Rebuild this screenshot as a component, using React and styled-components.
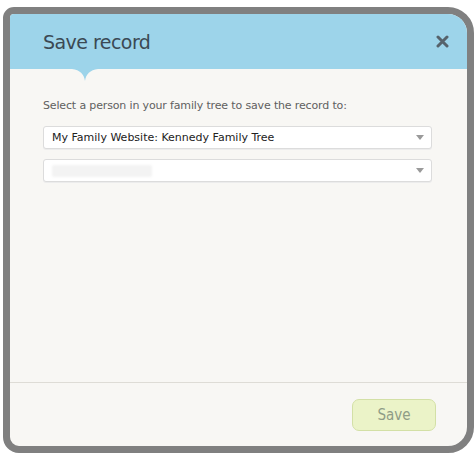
import React from 'react';
import styled, { createGlobalStyle } from 'styled-components';

const GlobalStyle = createGlobalStyle`
  *, *::before, *::after {
    box-sizing: border-box;
  }
  body {
    margin: 0;
    background: #ffffff;
    font-family: "DejaVu Sans", Verdana, sans-serif;
  }
`;

const Frame = styled.div`
  margin: 7px 0 0 3px;
  width: 471px;
  height: 446px;
  border: 7px solid #808080;
  border-radius: 11px 26px 26px 16px;
  background: #f8f7f4;
  display: flex;
  flex-direction: column;
  overflow: hidden;
`;

const Header = styled.div`
  position: relative;
  height: 55px;
  background: #9dd4ea;
  display: flex;
  align-items: center;
  justify-content: space-between;
  padding: 0 18px 0 33px;
  flex-shrink: 0;
`;

const Title = styled.h1`
  margin: 0;
  font-family: "DejaVu Sans", Verdana, sans-serif;
  font-weight: normal;
  font-size: 19px;
  color: #3b4954;
  letter-spacing: -0.55px;
`;

const Notch = styled.svg`
  position: absolute;
  left: 62px;
  top: 55px;
`;

const CloseButton = styled.button`
  border: 0;
  background: none;
  padding: 0;
  width: 13px;
  height: 13px;
  cursor: pointer;
  display: flex;
`;

const Body = styled.div`
  flex: 1;
  padding: 30px 35px 0 33px;
  display: flex;
  flex-direction: column;
  gap: 10px;
`;

const Prompt = styled.p`
  margin: 0 0 4px;
  font-size: 11px;
  letter-spacing: -0.15px;
  color: #606060;
`;

const SelectBox = styled.div`
  height: 23px;
  border: 1px solid #dcdcdc;
  border-radius: 3px;
  background: #ffffff;
  display: flex;
  align-items: center;
  justify-content: space-between;
  padding: 0 7px 0 8px;
  box-shadow: 0 1px 0 #ececec;
`;

const SelectText = styled.span`
  font-size: 11px;
  color: #222;
`;

const Blurred = styled.span`
  width: 100px;
  height: 12px;
  background: #f3f3f3;
  border-radius: 2px;
  filter: blur(1px);
`;

const Arrow = styled.span`
  width: 0;
  height: 0;
  border-left: 4px solid transparent;
  border-right: 4px solid transparent;
  border-top: 5px solid #9a9a9a;
`;

const Footer = styled.div`
  height: 64px;
  border-top: 1px solid #dedcd6;
  display: flex;
  align-items: center;
  justify-content: flex-end;
  padding: 0 31px 0 0;
  flex-shrink: 0;
`;

const SaveButton = styled.button`
  width: 84px;
  height: 32px;
  border: 1px solid #d3e0a6;
  border-radius: 7px;
  background: #ebf3c8;
  color: #8f9c86;
  font-size: 15px;
  font-family: "DejaVu Sans Condensed", "DejaVu Sans", sans-serif;
  cursor: default;
`;

export default function App() {
  return (
    <>
      <GlobalStyle />
      <Frame>
        <Header>
          <Title>Save record</Title>
          <CloseButton aria-label="Close">
            <svg width="13" height="13" viewBox="0 0 13 13">
              <path d="M2 2 L11 11 M11 2 L2 11" stroke="#56626b" strokeWidth="3" strokeLinecap="round" />
            </svg>
          </CloseButton>
          <Notch width="26" height="12" viewBox="0 0 26 12">
            <path d="M0 0 H26 C18 1 14 5 13 12 C12 5 8 1 0 0 Z" fill="#9dd4ea" />
          </Notch>
        </Header>
        <Body>
          <Prompt>Select a person in your family tree to save the record to:</Prompt>
          <SelectBox>
            <SelectText>My Family Website: Kennedy Family Tree</SelectText>
            <Arrow />
          </SelectBox>
          <SelectBox>
            <Blurred />
            <Arrow />
          </SelectBox>
        </Body>
        <Footer>
          <SaveButton>Save</SaveButton>
        </Footer>
      </Frame>
    </>
  );
}
